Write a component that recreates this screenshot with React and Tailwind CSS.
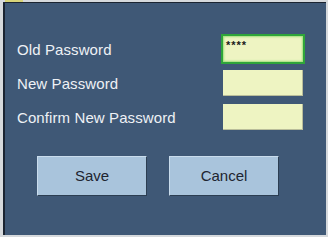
export default function App() {
  const rows = [
    { label: "Old Password", value: "****", active: true },
    { label: "New Password", value: "" },
    { label: "Confirm New Password", value: "" },
  ];

  return (
    <div
      className="w-[328px] h-[237px] bg-[#d6d9dc] flex flex-col overflow-hidden"
      style={{ fontFamily: '"Liberation Sans", Arial, sans-serif' }}
    >
      <div className="flex h-[2px] shrink-0">
        <div className="w-[5px]" />
        <div className="w-[18px] bg-[#d8d47a]" />
        <div className="flex-1" />
      </div>
      <div className="flex-1 ml-[3px] mr-[2px] mb-[2px] border-l-2 border-t border-[#1b2431] bg-[#3f5876] flex flex-col pt-[33px] pl-[12px] pr-[23px]">
        <div className="flex flex-col gap-[8px]">
          {rows.map((r) => (
            <div key={r.label} className="flex items-center justify-between h-[26px]">
              <span className="text-[15px] text-[#eef1f5] leading-none tracking-[0.1px]">{r.label}</span>
              <div
                className={
                  "w-[80px] h-[26px] bg-[#eef4c2] px-[3px] pt-[4px] text-[11px] font-bold leading-none text-[#1a1a1a] tracking-[1px] " +
                  (r.active
                    ? "outline-2 outline-[#2fa53a] shadow-[inset_0_0_2px_1px_#9fe07a]"
                    : "border-r border-b border-[#b9bd9a]")
                }
              >
                {r.value}
              </div>
            </div>
          ))}
        </div>
        <div className="flex gap-[22px] mt-[26px] pl-[20px]">
          {["Save", "Cancel"].map((b) => (
            <button
              key={b}
              className="w-[110px] h-[40px] bg-[#a9c4dc] border border-t-[#c9dcec] border-l-[#c9dcec] border-r-[#2c3e52] border-b-[#2c3e52] text-[15px] text-[#1e2530] flex items-center justify-center"
            >
              {b}
            </button>
          ))}
        </div>
      </div>
    </div>
  );
}
